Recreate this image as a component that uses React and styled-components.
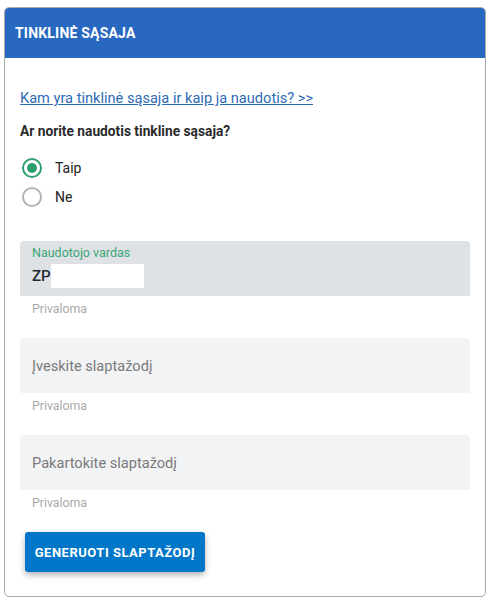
import React from "react";
import styled, { createGlobalStyle } from "styled-components";

const Global = createGlobalStyle`
  html, body { margin: 0; padding: 0; background: #fff; }
  body { font-family: Roboto, "Liberation Sans", Arial, sans-serif; }
  * { box-sizing: border-box; }
`;

const Page = styled.div`
  padding: 7px 4px 0 4px;
`;

const Card = styled.section`
  width: 482px;
  border: 1px solid #a9a9a9;
  border-radius: 5px;
  overflow: hidden;
  background: #fff;
`;

const Header = styled.header`
  height: 50px;
  background: #2968c0;
  color: #fff;
  display: flex;
  align-items: center;
  padding: 0 10px;
  font-weight: 700;
  font-size: 14px;
  letter-spacing: 0.2px;
`;

const Body = styled.div`
  padding: 30px 15px 24px 15px;
  display: flex;
  flex-direction: column;
`;

const HelpLink = styled.a`
  font-size: 14.6px;
  line-height: 20px;
  color: #2e6bb6;
  text-decoration: underline;
  cursor: pointer;
`;

const Question = styled.div`
  margin-top: 13px;
  font-size: 13.75px;
  line-height: 20px;
  font-weight: 700;
  color: #2b2b2b;
`;

const RadioGroup = styled.div`
  margin-top: 12px;
  display: flex;
  flex-direction: column;
  margin-bottom: 30px;
`;

const RadioRow = styled.label`
  display: flex;
  align-items: center;
  height: 29px;
  padding-left: 2px;
  gap: 13px;
  font-size: 14px;
  color: #222;
`;

const RadioCircle = styled.span`
  width: 20px;
  height: 20px;
  border-radius: 50%;
  border: 2px solid ${(p) => (p.$checked ? "#2f9d6c" : "#b3b3b3")};
  display: flex;
  align-items: center;
  justify-content: center;
  &::after {
    content: "";
    width: 10px;
    height: 10px;
    border-radius: 50%;
    background: ${(p) => (p.$checked ? "#2f9d6c" : "transparent")};
  }
`;

const FieldWrap = styled.div`
  display: flex;
  flex-direction: column;
  margin-bottom: 20px;
`;

const FieldBox = styled.div`
  height: 55px;
  border-radius: 4px 4px 0 0;
  background: ${(p) => (p.$filled ? "#dfe2e5" : "#f2f3f5")};
  padding: 0 12px;
  display: flex;
  flex-direction: column;
  justify-content: center;
`;

const FloatLabel = styled.div`
  font-size: 12.5px;
  line-height: 14px;
  color: #3ba678;
  margin-top: -3px;
`;

const Value = styled.div`
  display: flex;
  align-items: center;
  margin-top: 4px;
  font-size: 15px;
  font-weight: 500;
  color: #1f2a33;
  height: 24px;
`;

const Redact = styled.span`
  display: inline-block;
  width: 93px;
  height: 24px;
  background: #fff;
`;

const Placeholder = styled.div`
  font-size: 14.6px;
  color: #7a7a7a;
`;

const Helper = styled.div`
  padding: 4px 12px 0;
  font-size: 12.3px;
  line-height: 18px;
  color: #a9a9a9;
`;

const Button = styled.button`
  align-self: flex-start;
  margin-left: 5px;
  height: 40px;
  width: 180px;
  padding: 0;
  border: none;
  border-radius: 3px;
  background: #0077c8;
  color: #fff;
  font-family: Roboto, "Liberation Sans", Arial, sans-serif;
  font-weight: 700;
  font-size: 13px;
  letter-spacing: 0.5px;
  box-shadow: 0 3px 6px rgba(0, 0, 0, 0.3);
  cursor: pointer;
`;

const Field = ({ filled, label, value, placeholder }) => (
  <FieldWrap>
    <FieldBox $filled={filled}>
      {filled ? (
        <>
          <FloatLabel>{label}</FloatLabel>
          <Value>
            {value}
            <Redact />
          </Value>
        </>
      ) : (
        <Placeholder>{placeholder}</Placeholder>
      )}
    </FieldBox>
    <Helper>Privaloma</Helper>
  </FieldWrap>
);

export default function App() {
  return (
    <Page>
      <Global />
      <Card>
        <Header>TINKLINĖ SĄSAJA</Header>
        <Body>
          <div>
            <HelpLink>Kam yra tinklinė sąsaja ir kaip ja naudotis? &gt;&gt;</HelpLink>
          </div>
          <Question>Ar norite naudotis tinkline sąsaja?</Question>
          <RadioGroup>
            <RadioRow>
              <RadioCircle $checked />
              Taip
            </RadioRow>
            <RadioRow>
              <RadioCircle />
              Ne
            </RadioRow>
          </RadioGroup>
          <Field filled label="Naudotojo vardas" value="ZP" />
          <Field placeholder="Įveskite slaptažodį" />
          <Field placeholder="Pakartokite slaptažodį" />
          <Button>GENERUOTI SLAPTAŽODĮ</Button>
        </Body>
      </Card>
    </Page>
  );
}
